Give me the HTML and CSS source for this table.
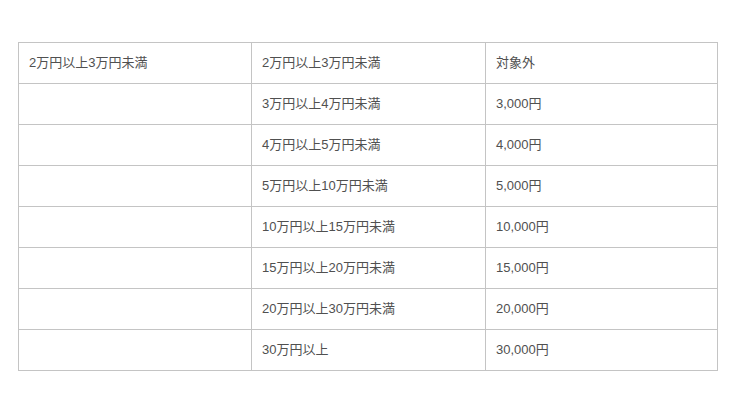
FILE: index.html
```html
<!DOCTYPE html>
<html lang="ja">
<head>
<meta charset="utf-8">
<link rel="stylesheet" href="styles.css">
</head>
<body>
<table class="tbl">
<tr><td>2万円以上3万円未満</td><td>2万円以上3万円未満</td><td>対象外</td></tr>
<tr><td></td><td>3万円以上4万円未満</td><td>3,000円</td></tr>
<tr><td></td><td>4万円以上5万円未満</td><td>4,000円</td></tr>
<tr><td></td><td>5万円以上10万円未満</td><td>5,000円</td></tr>
<tr><td></td><td>10万円以上15万円未満</td><td>10,000円</td></tr>
<tr><td></td><td>15万円以上20万円未満</td><td>15,000円</td></tr>
<tr><td></td><td>20万円以上30万円未満</td><td>20,000円</td></tr>
<tr><td></td><td>30万円以上</td><td>30,000円</td></tr>
</table>
</body>
</html>
```
FILE: styles.css
```css
html, body { margin: 0; background: #fff; }
body { padding: 42px 0 0 18px; font-family: "Liberation Sans", "Noto Sans CJK JP", sans-serif; }
.tbl { border-collapse: collapse; width: 700px; table-layout: fixed; }
.tbl td {
  border: 1px solid #c4c4c4;
  height: 41px;
  padding: 0 10px 3px;
  box-sizing: border-box;
  font-size: 13px;
  color: #505050;
  vertical-align: middle;
}
.tbl td:nth-child(1) { width: 233px; }
.tbl td:nth-child(2) { width: 234px; }
```
